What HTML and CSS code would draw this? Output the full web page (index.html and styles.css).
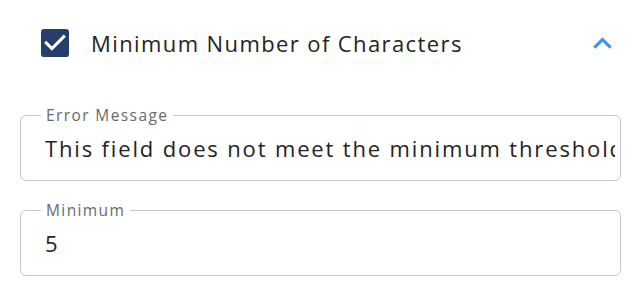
FILE: index.html
```html
<!DOCTYPE html>
<html>
<head>
<meta charset="utf-8">
<link rel="stylesheet" href="styles.css">
</head>
<body>
<div class="panel">
  <div class="header">
    <span class="checkbox">
      <svg width="28" height="28" viewBox="3 3 18 18"><rect x="3" y="3" width="18" height="18" rx="2" fill="#263f6a"/><path d="M10 17l-5-5 1.41-1.41L10 14.170l7.59-7.59L19 8l-9 9z" fill="#fff"/></svg>
    </span>
    <span class="title">Minimum Number of Characters</span>
    <span class="chevron">
      <svg width="37" height="37" viewBox="0 0 24 24"><path d="M12 8l-6 6 1.41 1.41L12 10.83l4.59 4.58L18 14z" fill="#3d95f7"/></svg>
    </span>
  </div>
  <fieldset class="field">
    <legend>Error Message</legend>
    <div class="value">This field does not meet the minimum threshold</div>
  </fieldset>
  <fieldset class="field">
    <legend>Minimum</legend>
    <div class="value">5</div>
  </fieldset>
</div>
</body>
</html>
```
FILE: styles.css
```css
html, body { margin: 0; padding: 0; background: #fff; }
body { font-family: "Open Sans", "DejaVu Sans", sans-serif; color: #222; }
.panel { padding: 0 0 0 20px; width: 601px; }
.header { display: flex; align-items: center; height: 86px; padding-left: 21px; padding-right: 0; }
.checkbox { width: 28px; height: 28px; display: flex; }
.title { font-size: 22px; margin-left: 22px; flex: 1; letter-spacing: 1.4px; color: #242424; }
.chevron { display: flex; width: 37px; height: 37px; }
.field { margin: 20px 0 0 0; border: 1px solid #c8c8c8; border-radius: 6px; padding: 0 5px 0 24px; height: 75px; box-sizing: border-box; min-width: 0; }
.field + .field { margin-top: 20px; }
legend { font-size: 15.5px; color: #6a6a6a; padding: 0 5px; margin-left: -4px; line-height: 18px; letter-spacing: 1.4px; }
.value { font-size: 22px; white-space: nowrap; overflow: hidden; line-height: 30px; padding-top: 9px; letter-spacing: 1.85px; color: #242424; }
```
